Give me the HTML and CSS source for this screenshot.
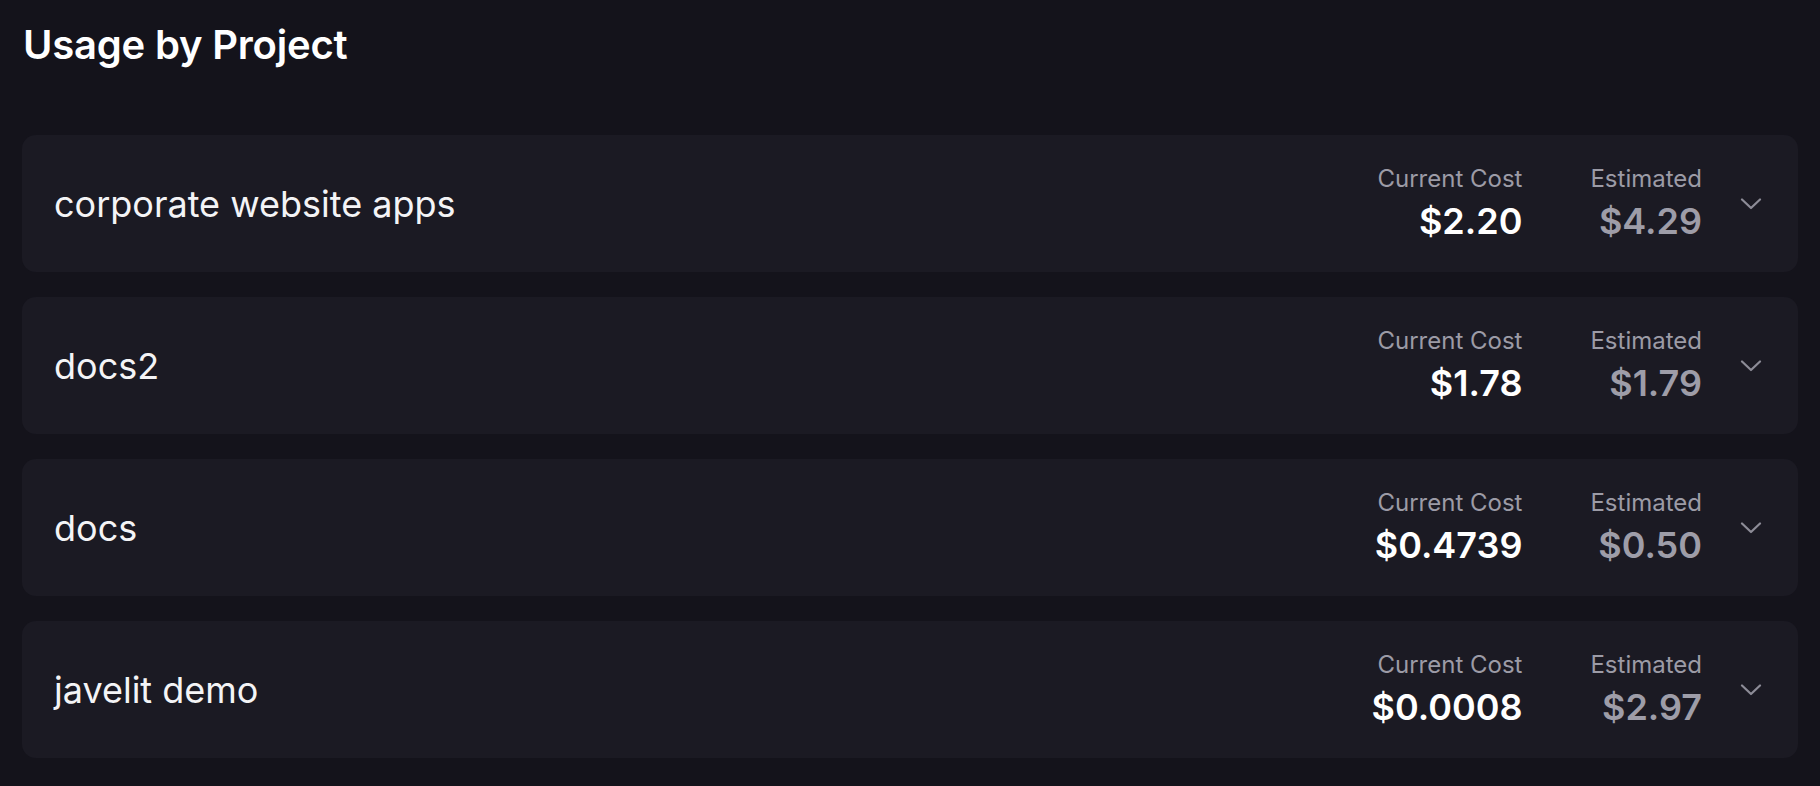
FILE: index.html
```html
<!DOCTYPE html>
<html lang="en">
<head>
<meta charset="utf-8">
<title>Usage by Project</title>
<link rel="stylesheet" href="styles.css">
</head>
<body>
<main class="page">
  <h1 class="title">Usage by Project</h1>
  <div class="list">
    <div class="card">
      <div class="name">corporate website apps</div>
      <div class="costs">
        <div class="metric"><div class="label">Current Cost</div><div class="value">$2.20</div></div>
        <div class="metric"><div class="label">Estimated</div><div class="value est">$4.29</div></div>
        <svg class="chev" width="22" height="12" viewBox="0 0 22 12"><polyline points="2,1.5 11,10 20,1.5" fill="none" stroke="#8d8c97" stroke-width="2.2" stroke-linecap="round" stroke-linejoin="round"/></svg>
      </div>
    </div>
    <div class="card">
      <div class="name">docs2</div>
      <div class="costs">
        <div class="metric"><div class="label">Current Cost</div><div class="value">$1.78</div></div>
        <div class="metric"><div class="label">Estimated</div><div class="value est">$1.79</div></div>
        <svg class="chev" width="22" height="12" viewBox="0 0 22 12"><polyline points="2,1.5 11,10 20,1.5" fill="none" stroke="#8d8c97" stroke-width="2.2" stroke-linecap="round" stroke-linejoin="round"/></svg>
      </div>
    </div>
    <div class="card">
      <div class="name">docs</div>
      <div class="costs">
        <div class="metric"><div class="label">Current Cost</div><div class="value">$0.4739</div></div>
        <div class="metric"><div class="label">Estimated</div><div class="value est">$0.50</div></div>
        <svg class="chev" width="22" height="12" viewBox="0 0 22 12"><polyline points="2,1.5 11,10 20,1.5" fill="none" stroke="#8d8c97" stroke-width="2.2" stroke-linecap="round" stroke-linejoin="round"/></svg>
      </div>
    </div>
    <div class="card">
      <div class="name">javelit demo</div>
      <div class="costs">
        <div class="metric"><div class="label">Current Cost</div><div class="value">$0.0008</div></div>
        <div class="metric"><div class="label">Estimated</div><div class="value est">$2.97</div></div>
        <svg class="chev" width="22" height="12" viewBox="0 0 22 12"><polyline points="2,1.5 11,10 20,1.5" fill="none" stroke="#8d8c97" stroke-width="2.2" stroke-linecap="round" stroke-linejoin="round"/></svg>
      </div>
    </div>
  </div>
</main>
</body>
</html>
```
FILE: styles.css
```css
html, body {
  margin: 0;
  padding: 0;
  background: #14131b;
  font-family: Inter, "Noto Sans", sans-serif;
  color: #ffffff;
}
.page {
  padding: 21px 22px 0 22px;
}
.title {
  margin: 0 0 0 1px;
  font-size: 40px;
  font-weight: 600;
  line-height: 48px;
  letter-spacing: -0.2px;
}
.list {
  margin-top: 66px;
  display: flex;
  flex-direction: column;
  gap: 25px;
}
.card {
  background: #1b1a23;
  border-radius: 14px;
  height: 137px;
  box-sizing: border-box;
  padding: 0 36px 0 32px;
  display: flex;
  align-items: center;
  justify-content: space-between;
}
.name {
  font-size: 36px;
  font-weight: 400;
  color: #f4f4f6;
}
.costs {
  display: flex;
  align-items: center;
}
.metric {
  display: flex;
  flex-direction: column;
  align-items: flex-end;
}
.metric + .metric {
  margin-left: 68px;
}
.label {
  font-size: 24px;
  line-height: 29px;
  color: #9c9ba6;
}
.value {
  margin-top: 6px;
  font-size: 36px;
  font-weight: 600;
  line-height: 44px;
  color: #ffffff;
}
.value.est {
  color: #9e9da8;
}
.chev {
  margin-left: 38px;
  display: block;
}
```
